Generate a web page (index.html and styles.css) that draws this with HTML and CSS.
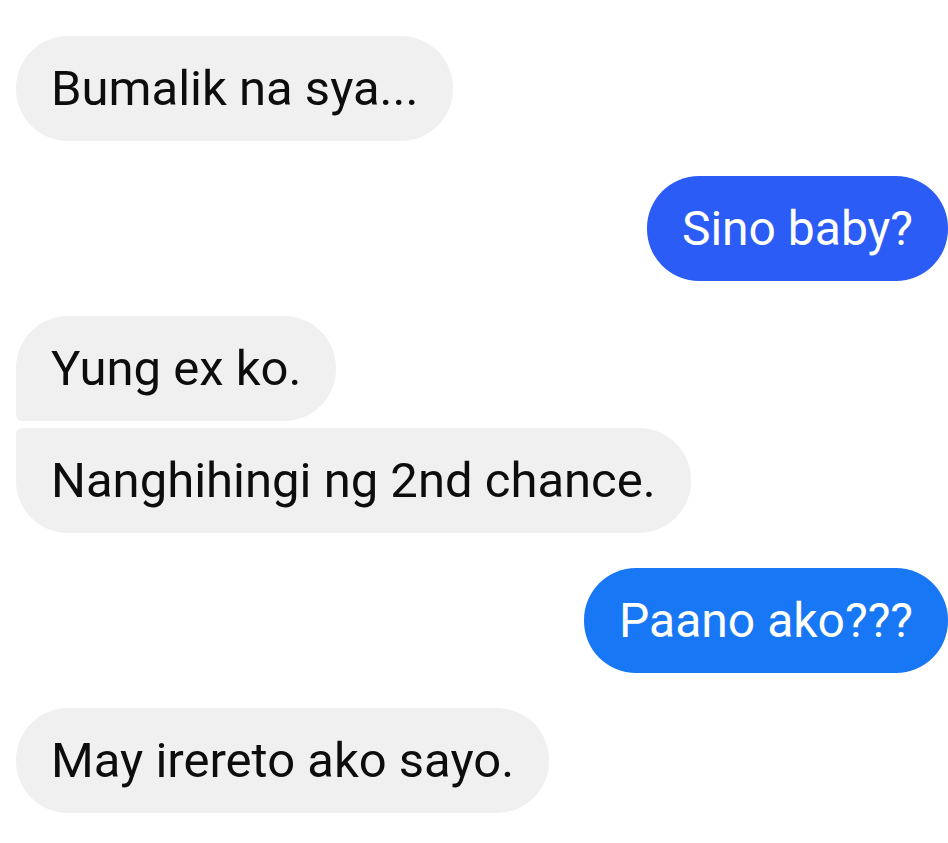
FILE: index.html
```html
<!DOCTYPE html>
<html>
<head>
<meta charset="utf-8">
<link rel="stylesheet" href="styles.css">
</head>
<body>
<div class="chat">
  <div class="group in">
    <div class="bubble gray">Bumalik na sya...</div>
  </div>
  <div class="group out">
    <div class="bubble blue1">Sino baby?</div>
  </div>
  <div class="group in">
    <div class="bubble gray first">Yung ex ko.</div>
    <div class="bubble gray last">Nanghihingi ng 2nd chance.</div>
  </div>
  <div class="group out">
    <div class="bubble blue2">Paano ako???</div>
  </div>
  <div class="group in">
    <div class="bubble gray">May irereto ako sayo.</div>
  </div>
</div>
</body>
</html>
```
FILE: styles.css
```css
html, body {
  margin: 0;
  padding: 0;
  background: #ffffff;
}
.chat {
  display: flex;
  flex-direction: column;
  gap: 35px;
  padding: 36px 0 0 16px;
  font-family: Roboto, "Liberation Sans", sans-serif;
}
.group {
  display: flex;
  flex-direction: column;
  gap: 7px;
}
.group.in { align-items: flex-start; }
.group.out { align-items: flex-end; }
.bubble {
  height: 105px;
  box-sizing: border-box;
  padding: 0 35px;
  display: flex;
  align-items: center;
  font-size: 48px;
  border-radius: 52px;
  white-space: nowrap;
}
.gray {
  background: #f0f0f0;
  color: #0d0d0d;
  font-size: 49px;
}
.blue1 {
  background: #2b5cf5;
  color: #ffffff;
}
.blue2 {
  background: #1877f5;
  color: #ffffff;
}
.first { border-bottom-left-radius: 6px; }
.last { border-top-left-radius: 6px; }
```
